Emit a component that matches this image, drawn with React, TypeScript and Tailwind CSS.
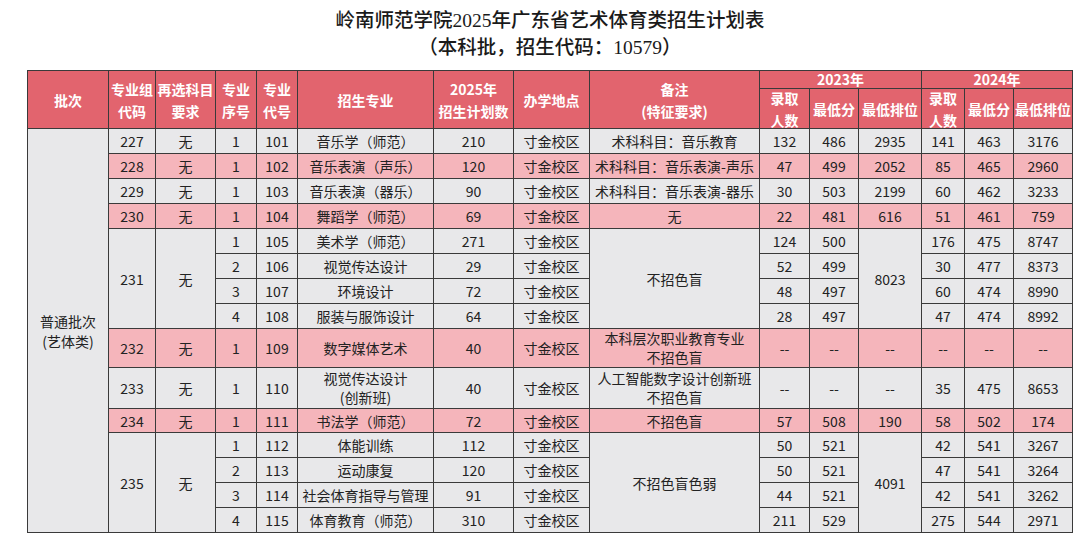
import React from "react";

type Row = {
  seq: string;
  code: string;
  name: React.ReactNode;
  plan: string;
  a: string[];
  b: string[];
};

const GRAY = "bg-[#e8e8ea]";
const PINK = "bg-[#f5b5bb]";

const head =
  "bg-[#e2646e] text-white font-semibold text-[14px] leading-[22px] flex flex-col items-center justify-center text-center";
const cell =
  "flex flex-col items-center text-center text-[14px] text-[#222] overflow-hidden whitespace-nowrap";

const C = ({
  bg,
  className = "justify-center leading-[20px]",
  children,
}: {
  bg: string;
  className?: string;
  children?: React.ReactNode;
}) => <div className={`${cell} ${bg} ${className}`}>{children}</div>;

// 单专业组（一行）
const SingleRow = ({
  group,
  row,
  note,
  bg,
  noteClass,
}: {
  group: string;
  row: Row;
  note: React.ReactNode;
  bg: string;
  noteClass?: string;
}) => (
  <>
    <C bg={bg}>{group}</C>
    <C bg={bg}>无</C>
    <C bg={bg}>{row.seq}</C>
    <C bg={bg}>{row.code}</C>
    <C bg={bg}>{row.name}</C>
    <C bg={bg}>{row.plan}</C>
    <C bg={bg}>寸金校区</C>
    <C bg={bg} className={noteClass}>
      {note}
    </C>
    {row.a.map((v, i) => (
      <C key={"a" + i} bg={bg}>
        {v}
      </C>
    ))}
    {row.b.map((v, i) => (
      <C key={"b" + i} bg={bg}>
        {v}
      </C>
    ))}
  </>
);

// 四个专业的专业组，组号/备注/2023最低排位合并
const GroupRows = ({ group, rows, note, rank }: { group: string; rows: Row[]; note: string; rank: string }) => (
  <>
    {rows.map((r, i) => (
      <React.Fragment key={r.code}>
        {i === 0 && (
          <>
            <C bg={GRAY} className="row-span-4 justify-center leading-[20px]">
              {group}
            </C>
            <C bg={GRAY} className="row-span-4 justify-center leading-[20px]">
              无
            </C>
          </>
        )}
        <C bg={GRAY}>{r.seq}</C>
        <C bg={GRAY}>{r.code}</C>
        <C bg={GRAY}>{r.name}</C>
        <C bg={GRAY}>{r.plan}</C>
        <C bg={GRAY}>寸金校区</C>
        {i === 0 && (
          <C bg={GRAY} className="row-span-4 justify-center leading-[20px]">
            {note}
          </C>
        )}
        <C bg={GRAY}>{r.a[0]}</C>
        <C bg={GRAY}>{r.a[1]}</C>
        {i === 0 && (
          <C bg={GRAY} className="row-span-4 justify-center leading-[20px]">
            {rank}
          </C>
        )}
        {r.b.map((v, j) => (
          <C key={j} bg={GRAY}>
            {v}
          </C>
        ))}
      </React.Fragment>
    ))}
  </>
);

const group231: Row[] = [
  { seq: "1", code: "105", name: "美术学（师范）", plan: "271", a: ["124", "500"], b: ["176", "475", "8747"] },
  { seq: "2", code: "106", name: "视觉传达设计", plan: "29", a: ["52", "499"], b: ["30", "477", "8373"] },
  { seq: "3", code: "107", name: "环境设计", plan: "72", a: ["48", "497"], b: ["60", "474", "8990"] },
  { seq: "4", code: "108", name: "服装与服饰设计", plan: "64", a: ["28", "497"], b: ["47", "474", "8992"] },
];

const group235: Row[] = [
  { seq: "1", code: "112", name: "体能训练", plan: "112", a: ["50", "521"], b: ["42", "541", "3267"] },
  { seq: "2", code: "113", name: "运动康复", plan: "120", a: ["50", "521"], b: ["47", "541", "3264"] },
  { seq: "3", code: "114", name: "社会体育指导与管理", plan: "91", a: ["44", "521"], b: ["42", "541", "3262"] },
  { seq: "4", code: "115", name: "体育教育（师范）", plan: "310", a: ["211", "529"], b: ["275", "544", "2971"] },
];

export default function App() {
  return (
    <div className="w-[1082px] h-[548px] bg-white pl-[27px] font-['Noto_Sans_CJK_SC','Noto_Sans',sans-serif] overflow-hidden">
      <div className="w-[1046px]">
        <div className="pt-[7px] text-center text-[19.5px] leading-[27px] text-[#1a1a1a] font-medium font-['Liberation_Serif','Noto_Sans_CJK_SC',serif]">
          <div>岭南师范学院2025年广东省艺术体育类招生计划表</div>
          <div>（本科批，招生代码：10579）</div>
        </div>

        <div className="mt-[9px] grid gap-px p-px bg-[#3a3a3a] grid-cols-[80px_46px_59px_40px_40px_135px_79px_75px_169px_49px_48px_62px_42px_48px_58px] grid-rows-[17px_39px_repeat(8,24px)_38px_40px_23px_repeat(4,24px)]">
          {/* 表头 */}
          <div className={`${head} row-span-2`}>批次</div>
          <div className={`${head} row-span-2`}>
            <span>专业组</span>
            <span>代码</span>
          </div>
          <div className={`${head} row-span-2`}>
            <span>再选科目</span>
            <span>要求</span>
          </div>
          <div className={`${head} row-span-2`}>
            <span>专业</span>
            <span>序号</span>
          </div>
          <div className={`${head} row-span-2`}>
            <span>专业</span>
            <span>代号</span>
          </div>
          <div className={`${head} row-span-2`}>招生专业</div>
          <div className={`${head} row-span-2`}>
            <span>2025年</span>
            <span>招生计划数</span>
          </div>
          <div className={`${head} row-span-2`}>办学地点</div>
          <div className={`${head} row-span-2`}>
            <span>备注</span>
            <span>(特征要求)</span>
          </div>
          <div className={`${head} col-span-3`}>
            <span className="leading-[17px]">2023年</span>
          </div>
          <div className={`${head} col-span-3`}>
            <span className="leading-[17px]">2024年</span>
          </div>
          <div className={`${head} overflow-hidden`}>
            <span>录取</span>
            <span>人数</span>
          </div>
          <div className={head}>最低分</div>
          <div className={head}>最低排位</div>
          <div className={`${head} overflow-hidden`}>
            <span>录取</span>
            <span>人数</span>
          </div>
          <div className={head}>最低分</div>
          <div className={head}>最低排位</div>

          {/* 批次 */}
          <C bg={GRAY} className="row-span-15 justify-center leading-[20px]">
            <span>普通批次</span>
            <span>(艺体类)</span>
          </C>

          <SingleRow
            group="227"
            bg={GRAY}
            note="术科科目：音乐教育"
            row={{ seq: "1", code: "101", name: "音乐学（师范）", plan: "210", a: ["132", "486", "2935"], b: ["141", "463", "3176"] }}
          />
          <SingleRow
            group="228"
            bg={PINK}
            note="术科科目：音乐表演-声乐"
            row={{ seq: "1", code: "102", name: "音乐表演（声乐）", plan: "120", a: ["47", "499", "2052"], b: ["85", "465", "2960"] }}
          />
          <SingleRow
            group="229"
            bg={GRAY}
            note="术科科目：音乐表演-器乐"
            row={{ seq: "1", code: "103", name: "音乐表演（器乐）", plan: "90", a: ["30", "503", "2199"], b: ["60", "462", "3233"] }}
          />
          <SingleRow
            group="230"
            bg={PINK}
            note="无"
            row={{ seq: "1", code: "104", name: "舞蹈学（师范）", plan: "69", a: ["22", "481", "616"], b: ["51", "461", "759"] }}
          />

          <GroupRows group="231" rows={group231} note="不招色盲" rank="8023" />

          <SingleRow
            group="232"
            bg={PINK}
            noteClass="justify-center leading-[19px]"
            note={
              <>
                <span>本科层次职业教育专业</span>
                <span>不招色盲</span>
              </>
            }
            row={{ seq: "1", code: "109", name: "数字媒体艺术", plan: "40", a: ["--", "--", "--"], b: ["--", "--", "--"] }}
          />
          <SingleRow
            group="233"
            bg={GRAY}
            noteClass="justify-center leading-[19px]"
            note={
              <>
                <span>人工智能数字设计创新班</span>
                <span>不招色盲</span>
              </>
            }
            row={{
              seq: "1",
              code: "110",
              name: (
                <>
                  <span className="leading-[19px]">视觉传达设计</span>
                  <span className="leading-[19px]">(创新班)</span>
                </>
              ),
              plan: "40",
              a: ["--", "--", "--"],
              b: ["35", "475", "8653"],
            }}
          />
          <SingleRow
            group="234"
            bg={PINK}
            note="不招色盲"
            row={{ seq: "1", code: "111", name: "书法学（师范）", plan: "72", a: ["57", "508", "190"], b: ["58", "502", "174"] }}
          />

          <GroupRows group="235" rows={group235} note="不招色盲色弱" rank="4091" />
        </div>
      </div>
    </div>
  );
}
